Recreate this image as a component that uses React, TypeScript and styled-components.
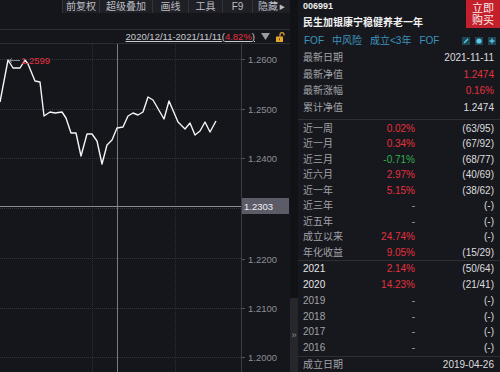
import React from "react";
import styled, { createGlobalStyle } from "styled-components";

const GlobalStyle = createGlobalStyle`
  html, body {
    margin: 0;
    padding: 0;
    background: #15161b;
  }
  body {
    font-family: "Liberation Sans", "Noto Sans CJK SC", sans-serif;
  }
`;

const RED = "#e5303f";
const GREEN = "#2fb14b";

const Page = styled.div`
  display: flex;
  width: 500px;
  height: 372px;
  overflow: hidden;
  background: #15161b;
`;

const LeftPane = styled.div`
  width: 290px;
  display: flex;
  flex-direction: column;
`;

const Toolbar = styled.div`
  height: 13px;
  display: flex;
  justify-content: flex-end;
`;

const ToolButton = styled.div<{ $w: number }>`
  width: ${(p) => p.$w}px;
  display: flex;
  align-items: center;
  justify-content: center;
  background: #1f2026;
  border-left: 1px solid #33343a;
  box-sizing: border-box;
  color: #bdbec4;
  font-size: 10px;
  line-height: 1;
  white-space: nowrap;
`;

const Caret = styled.span`
  font-size: 6px;
  margin-left: 1px;
`;

const Spacer = styled.div`
  height: 16px;
`;

const DateBar = styled.div`
  height: 15px;
  box-sizing: border-box;
  border-top: 1px solid #2c2d33;
  border-bottom: 1px solid #2c2d33;
  display: flex;
  align-items: center;
  justify-content: flex-end;
  padding-right: 5px;
  gap: 6px;
`;

const RangeText = styled.span`
  font-size: 9.5px;
  color: #c9cacf;
  text-decoration: underline;
  line-height: 1;
`;

const Red = styled.span`
  color: ${RED};
`;

const ChartArea = styled.div`
  flex: 1;
  display: flex;
`;

const Plot = styled.div`
  width: 241px;
  border-right: 1px solid #3c3d44;
  position: relative;
`;

const Axis = styled.div`
  flex: 1;
  position: relative;
`;

const AxisLabel = styled.div<{ $y: number }>`
  position: absolute;
  left: 0;
  top: ${(p) => p.$y - 6}px;
  height: 12px;
  display: flex;
  align-items: center;
  font-size: 9.5px;
  color: #8d8e94;
  &::before {
    content: "";
    width: 3px;
    height: 1px;
    background: #55565c;
    margin-right: 3px;
  }
`;

const CurrentTag = styled.div<{ $y: number }>`
  position: absolute;
  left: 0;
  right: 1px;
  top: ${(p) => p.$y - 8}px;
  height: 16px;
  background: #5b5c68;
  color: #f0f0f4;
  font-size: 9.5px;
  display: flex;
  align-items: center;
  padding-left: 2px;
`;

const Strip = styled.div`
  width: 8px;
  display: flex;
  flex-direction: column;
  justify-content: flex-end;
  background: #111216;
`;

const StripTab = styled.div`
  height: 74px;
  background: #26272d;
  color: #8a8b91;
  font-size: 9px;
  display: flex;
  align-items: center;
  justify-content: center;
`;

const RightPane = styled.div`
  flex: 1;
  display: flex;
  flex-direction: column;
  background: #17181d;
`;

const Header = styled.div`
  display: flex;
  justify-content: space-between;
  padding-left: 5px;
`;

const Code = styled.div`
  font-size: 9px;
  font-weight: bold;
  color: #eeeeee;
  line-height: 12px;
`;

const Name = styled.div`
  margin-top: 5px;
  font-size: 10px;
  font-weight: bold;
  color: #f2f2f2;
  line-height: 12px;
  white-space: nowrap;
`;

const BuyButton = styled.div`
  width: 34px;
  height: 28px;
  background: #c4202b;
  color: #fbe9e9;
  font-size: 11px;
  line-height: 12px;
  display: flex;
  flex-direction: column;
  align-items: center;
  justify-content: center;
`;

const TagRow = styled.div`
  margin-top: 6px;
  height: 13px;
  padding: 0 4px 0 6px;
  display: flex;
  align-items: center;
  justify-content: space-between;
  margin-bottom: 2px;
`;

const Tags = styled.div`
  display: flex;
  gap: 8px;
  font-size: 10px;
  color: #3d93bd;
  line-height: 1;
`;

const Icons = styled.div`
  display: flex;
  gap: 5px;
`;

const IconBox = styled.div`
  width: 8px;
  height: 8px;
  background: #1d4755;
  display: flex;
  align-items: center;
  justify-content: center;
`;

const Group = styled.div<{ $top?: number; $line?: boolean }>`
  padding-top: ${(p) => p.$top || 0}px;
  border-bottom: ${(p) => (p.$line ? "1px solid #2e2f35" : "none")};
`;

const Row = styled.div<{ $h: number }>`
  height: ${(p) => p.$h}px;
  display: grid;
  grid-template-columns: 62px 50px 1fr;
  align-items: center;
  padding: 0 6px 0 5px;
  font-size: 10px;
  line-height: 1;
  white-space: nowrap;
`;

const Label = styled.span<{ $bright?: boolean }>`
  color: ${(p) => (p.$bright ? "#e6e6e8" : "#a2a3a9")};
`;

const Value = styled.span<{ $color?: string }>`
  text-align: right;
  color: ${(p) => p.$color || "#dcdcde"};
`;

const Wide = styled(Value)`
  grid-column: 2 / 4;
`;

const tools = [
  { label: "前复权", w: 37 },
  { label: "超级叠加", w: 53 },
  { label: "画线", w: 36 },
  { label: "工具", w: 34 },
  { label: "F9", w: 30 },
  { label: "隐藏", w: 38, caret: true },
];

const points: [number, number][] = [
  [0, 102], [8, 60], [13, 68], [20, 68], [25, 60], [28, 64], [35, 81], [40, 82],
  [44, 116], [50, 112], [55, 113], [62, 112], [66, 118], [71, 133], [76, 133],
  [81, 156], [87, 134], [92, 134], [97, 141], [102, 164], [107, 145], [112, 140],
  [117, 128], [123, 127], [128, 116], [133, 113], [138, 115], [143, 112], [148, 97],
  [153, 100], [164, 119], [169, 101], [178, 122], [185, 129], [190, 123], [195, 135],
  [200, 131], [205, 122], [210, 132], [216, 121],
];

const gridY = [59, 109, 158, 208, 258, 308, 357];
const axisLabels = [
  { y: 59, v: "1.2600" },
  { y: 109, v: "1.2500" },
  { y: 158, v: "1.2400" },
  { y: 259, v: "1.2200" },
  { y: 308, v: "1.2100" },
  { y: 357, v: "1.2000" },
];

const topRows = [
  { label: "最新日期", value: "2021-11-11" },
  { label: "最新净值", value: "1.2474", color: RED },
  { label: "最新涨幅", value: "0.16%", color: RED },
  { label: "累计净值", value: "1.2474" },
];

type PerfRow = { label: string; pct: string; rank: string; color?: string; bright?: boolean };

const perfRows: PerfRow[] = [
  { label: "近一周", pct: "0.02%", rank: "(63/95)", color: RED },
  { label: "近一月", pct: "0.34%", rank: "(67/92)", color: RED },
  { label: "近三月", pct: "-0.71%", rank: "(68/77)", color: GREEN },
  { label: "近六月", pct: "2.97%", rank: "(40/69)", color: RED },
  { label: "近一年", pct: "5.15%", rank: "(38/62)", color: RED },
  { label: "近三年", pct: "-", rank: "(-)", color: "#a2a3a9" },
  { label: "近五年", pct: "-", rank: "(-)", color: "#a2a3a9" },
  { label: "成立以来", pct: "24.74%", rank: "(-)", color: RED },
  { label: "年化收益", pct: "9.05%", rank: "(15/29)", color: RED },
];

const yearRows: PerfRow[] = [
  { label: "2021", pct: "2.14%", rank: "(50/64)", color: RED, bright: true },
  { label: "2020", pct: "14.23%", rank: "(21/41)", color: RED, bright: true },
  { label: "2019", pct: "-", rank: "(-)", color: "#a2a3a9" },
  { label: "2018", pct: "-", rank: "(-)", color: "#a2a3a9" },
  { label: "2017", pct: "-", rank: "(-)", color: "#a2a3a9" },
  { label: "2016", pct: "-", rank: "(-)", color: "#a2a3a9" },
];

const LockIcon = () => (
  <svg width="9" height="10" viewBox="0 0 9 10">
    <path d="M4 4.5V2.6a2 2 0 0 1 4 0V3.5" fill="none" stroke="#e3a72b" strokeWidth="1.2" />
    <rect x="0" y="4.5" width="7" height="5.5" fill="#e3a72b" />
    <rect x="3" y="6.3" width="1" height="2" fill="#6b4a10" />
  </svg>
);

const TrendChart = () => {
  const line = points.map(([x, y]) => `${x},${y}`).join(" ");
  return (
    <svg width="241" height="328" viewBox="0 44 241 328" style={{ display: "block" }}>
      {gridY.map((y) => (
        <line key={y} x1="0" x2="241" y1={y + 0.5} y2={y + 0.5} stroke="#34353c" strokeDasharray="1 1" />
      ))}
      {[92, 175].map((x) => (
        <line key={x} x1={x + 0.5} x2={x + 0.5} y1="44" y2="372" stroke="#2e2f36" strokeDasharray="1 1" />
      ))}
      <line x1="117.5" x2="117.5" y1="44" y2="372" stroke="#7a7b82" strokeWidth="1" />
      <line x1="0" x2="241" y1="206.5" y2="206.5" stroke="#8a8b92" strokeWidth="1" />
      <polyline points={line} fill="none" stroke="#f4f4f6" strokeWidth="1.4" strokeLinejoin="round" />
      <line x1="9" x2="20" y1="60.5" y2="60.5" stroke="#8a8b92" strokeWidth="1" />
      <path d="M9 60.5 L12 58.5 M9 60.5 L12 62.5" stroke="#8a8b92" strokeWidth="1" fill="none" />
      <text x="21" y="64" fill={RED} fontSize="9.5" fontFamily="Liberation Sans, sans-serif">
        1.2599
      </text>
    </svg>
  );
};

export default function App() {
  return (
    <>
      <GlobalStyle />
      <Page>
        <LeftPane>
          <Toolbar>
            {tools.map((t) => (
              <ToolButton key={t.label} $w={t.w}>
                {t.label}
                {t.caret && <Caret>▶</Caret>}
              </ToolButton>
            ))}
          </Toolbar>
          <Spacer />
          <DateBar>
            <RangeText>
              2020/12/11-2021/11/11(<Red>4.82%</Red>)
            </RangeText>
            <svg width="9" height="7" viewBox="0 0 9 7">
              <path d="M0 0 H9 L4.5 7 Z" fill="#9a9ba1" />
            </svg>
            <LockIcon />
          </DateBar>
          <ChartArea>
            <Plot>
              <TrendChart />
            </Plot>
            <Axis>
              {axisLabels.map((a) => (
                <AxisLabel key={a.v} $y={a.y - 44}>
                  {a.v}
                </AxisLabel>
              ))}
              <CurrentTag $y={206 - 44}>1.2303</CurrentTag>
            </Axis>
          </ChartArea>
        </LeftPane>
        <Strip>
          <StripTab>»</StripTab>
        </Strip>
        <RightPane>
          <Header>
            <div>
              <Code>006991</Code>
              <Name>民生加银康宁稳健养老一年</Name>
            </div>
            <BuyButton>
              <span>立即</span>
              <span>购买</span>
            </BuyButton>
          </Header>
          <TagRow>
            <Tags>
              <span>FOF</span>
              <span>中风险</span>
              <span>成立&lt;3年</span>
              <span>FOF</span>
            </Tags>
            <Icons>
              <IconBox>
                <svg width="6" height="6" viewBox="0 0 6 6">
                  <path d="M0.5 5.5 L1 4 L4.5 0.5 L5.5 1.5 L2 5 Z" fill="#5cc9e6" />
                </svg>
              </IconBox>
              <IconBox>
                <svg width="6" height="6" viewBox="0 0 6 6">
                  <circle cx="3" cy="3" r="2.6" fill="#5cc9e6" />
                </svg>
              </IconBox>
              <IconBox>
                <svg width="6" height="6" viewBox="0 0 6 6">
                  <path d="M3 0.5 V5.5 M0.5 3 H5.5" stroke="#5cc9e6" strokeWidth="1.3" />
                </svg>
              </IconBox>
            </Icons>
          </TagRow>
          <Group $line>
            {topRows.map((r) => (
              <Row key={r.label} $h={16.5}>
                <Label>{r.label}</Label>
                <Wide $color={r.color}>{r.value}</Wide>
              </Row>
            ))}
            <div style={{ height: 3 }} />
          </Group>
          <Group $top={1} $line>
            {perfRows.map((r) => (
              <Row key={r.label} $h={15.5}>
                <Label>{r.label}</Label>
                <Value $color={r.color}>{r.pct}</Value>
                <Value>{r.rank}</Value>
              </Row>
            ))}
          </Group>
          <Group $line>
            {yearRows.map((r) => (
              <Row key={r.label} $h={15.8}>
                <Label $bright={r.bright}>{r.label}</Label>
                <Value $color={r.color}>{r.pct}</Value>
                <Value>{r.rank}</Value>
              </Row>
            ))}
          </Group>
          <Row $h={15}>
            <Label>成立日期</Label>
            <Wide>2019-04-26</Wide>
          </Row>
        </RightPane>
      </Page>
    </>
  );
}
